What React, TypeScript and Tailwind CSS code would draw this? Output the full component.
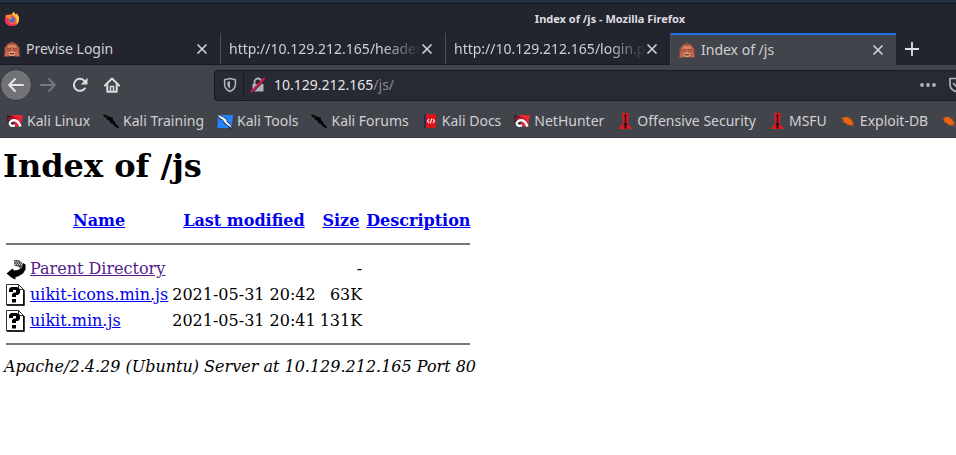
import type { ReactNode } from 'react'

function FirefoxIcon() {
  return (
    <svg viewBox="0 0 16 16" className="h-4 w-4">
      <path d="M8.200 3C9 1.500 9.600 1 9.800.8c.2 1.200 1.200 1.800 2.200 3l.3-1.200c2 1.700 3 3.600 2.700 6.400-.4 3.700-3.300 6-7 6C4 15 1 12.200 1 8.400c0-2.200.6-3.800 1.700-5.200l.4 1.300C4.500 3.500 6 3.300 8.200 3z" fill="#ff5a3c" />
      <path d="M9.800.8c.2 1.200 1.200 1.800 2.200 3l.3-1.200c2 1.700 3 3.600 2.700 6.400-.3 2.400-1.600 4.200-3.500 5.200 1.800-3 1.300-6.500-.5-8.200L8.200 3.500C8.400 2 9.300 1.100 9.800.8z" fill="#ffc83a" />
      <path d="M1 8.400c0 4 3 6.600 7 6.600 2.600 0 4.700-1 5.900-2.900-2.500 1.900-5.400 1.900-7.700.4C3.800 11 3.700 8.500 5 6.500L2.200 5C1.400 6 1 7 1 8.400z" fill="#f0305a" />
      <path d="M2.700 3.200l.4 1.300c1.400-.8 2.800-.7 4.100 0L5 6.800 2 6.300c0-1.300.2-2.200.7-3.100z" fill="#ff9a2c" />
      <circle cx="8" cy="8.600" r="2.900" fill="#3d6fd8" />
      <path d="M4.500 6.200c1.200-.5 2.300-.2 3.200.4l1.200.1-.9 1.200-2 .6z" fill="#ff8a30" />
    </svg>
  )
}

function MonkeyIcon() {
  return (
    <svg viewBox="0 0 16 16" className="h-4 w-4 shrink-0">
      <path d="M7 1.500 8 0l1 1.500c2.800.4 4.500 2 5 4 1.900.4 2.300 2.600 1.200 3.700L16 15.500h-4.500L8 15l-3.500.5H0l.8-6.300C-.3 8.100.1 5.900 2 5.500c.5-2 2.200-3.600 5-4z" fill="#a4523f" />
      <path d="M3.300 6C4 3.600 6.500 3 8 4.200 9.500 3 12 3.600 12.700 6l.6 3H2.700z" fill="#d9825f" />
      <path d="M2.300 7.500 7.700 6.200v3.300L5 11.300l-.5 4H.8zM13.700 7.500 8.300 6.200v3.300l2.700 1.800.5 4h3.700z" fill="#c4694e" />
      <path d="M2.800 7.600h4.700M3 9.200h4.200M13.200 7.600H8.500M13 9.200H8.800" stroke="#8f4436" strokeWidth=".7" />
      <path d="M4.800 11.500 8 9.800l3.200 1.700-.4 3L8 15.200l-2.800-.7z" fill="#e8a27f" />
      <path d="M6 12.300c1.300.9 2.700.9 4 0" fill="none" stroke="#3b1b19" strokeWidth="1.200" />
    </svg>
  )
}

function CloseIcon() {
  return (
    <svg viewBox="0 0 12 12" className="h-3 w-3">
      <path d="M1.500 1.500l9 9M10.500 1.500l-9 9" stroke="#d4d4d6" strokeWidth="1.600" />
    </svg>
  )
}

function ShieldIcon() {
  return (
    <svg viewBox="0 0 14 16" className="h-4 w-[14px] shrink-0" fill="none">
      <path d="M7 1.500 12.400 2.700v4.800c0 3-1.900 5.300-5.400 7-3.500-1.700-5.400-4-5.400-7V2.700z" stroke="#b4b4b8" strokeWidth="1.500" strokeLinejoin="round" />
      <path d="M7 4.300v7.200c-1.700-1-2.600-2.300-2.600-4V4.800z" fill="#b4b4b8" />
    </svg>
  )
}

// Red ribbon dragon, shared by Kali Linux and NetHunter
function DragonIcon() {
  return (
    <svg viewBox="0 0 16 16" className="h-4 w-4">
      <path d="M3 2h13l-2 11.500H9z" fill="#e8262f" />
      <path d="M0 1.500 3.500 3 5 2.500 9 6l-4 7.500-3-.5-1.500-4z" fill="#35202a" />
      <path d="M1.500 7C3.500 4.500 7 4 9.500 6c2 1.500 3 4 4.500 7" fill="none" stroke="#b8142f" strokeWidth="2" />
      <path d="M13.500 13.500C12 9.500 10.500 7.200 7.500 7.200 4.300 7.200 2.400 9 2.800 11c.5 2 3.200 2.300 5.200 1.300" fill="none" stroke="#fff" strokeWidth="2.400" />
    </svg>
  )
}

function BlackDragonIcon() {
  return (
    <svg viewBox="0 0 16 16" className="h-4 w-4">
      <path d="M0 1l5 2 1.500 1 3 .3.6 3 2 1.700.4 1.500L16 14l-.6 1.600-3.800-2.300-1.500-2-3-1.500L6 7 3.500 6.700 4 5 1 3.600z" fill="#050505" />
    </svg>
  )
}

function ToolsIcon() {
  return (
    <svg viewBox="0 0 16 16" className="h-4 w-4">
      <path d="M1 2h15l-1.500 13H.5z" fill="#2583ff" />
      <path d="M0 1l5 2 2 1.500 2.500.5.500 3 2.500 2 3.500 5.500h-3l-3-3-3-2L6 7.500 3 6.500z" fill="#10233f" />
      <path d="M.5 1.500l5 2.500L9 6l1 3 2.500 2 2.500 4-4-2.500-3-2.500L6 7 3 5z" fill="#f4f4f4" />
    </svg>
  )
}

function DocsIcon() {
  return (
    <svg viewBox="0 0 16 16" className="h-4 w-4">
      <path d="M2 1h2v14H2z" fill="#1f2c52" />
      <path d="M4 1h10v14H4z" fill="#d9141a" />
      <path d="M7 6 5.500 8 7 10M11 6l1.500 2-1.500 2M9.700 5.600 8.300 10.400" fill="none" stroke="#fff" strokeWidth="1.100" />
    </svg>
  )
}

function DaggerIcon() {
  return (
    <svg viewBox="0 0 16 16" className="h-4 w-4">
      <path d="M5 0h7l-1 11 3.500 3.500V16H2v-1.500L6 11z" fill="#d81a22" />
      <path d="M8 1h1l.6 2-.6 1 .3 6 1 1.500-1 1.500.2 2.500h-2l.2-2.500-1-1.500 1-1.500L8 4l-.6-1z" fill="#240b0f" />
    </svg>
  )
}

function BugIcon() {
  return (
    <svg viewBox="0 0 16 16" className="h-4 w-4">
      <path d="M3.500 4.500c3-1.700 7 .5 8.500 3.200 1.300 1.500 1.500 4 0 4.600-2 .7-4.200-.9-5.700-1.700C4 9.500 1.800 6.600 3.500 4.500z" fill="#f0640f" />
      <path d="M1 5l3 1.500M2.500 9.500 5 8.500M7 12.500l1-2M8 3.500l.5 2M11.500 5.500l-1 1.500M11.500 11l2.500 2.500M12 9.500l2 .5" stroke="#c9591b" strokeWidth="1" />
    </svg>
  )
}

function BackIcon() {
  return (
    <svg viewBox="0 0 20 22" className="h-[22px] w-5">
      <path d="M8 2h4.500L16 4.500 17.500 8l-3 2.500L12 8.500 8.500 8z" fill="#555" />
      <path d="M9 3.500h1M11 3.500h1M10 5h1M12 5h1M14 5h1M9 6.500h1M11 6.500h1M13 6.500h1M15 6.500h1" stroke="#ccc" strokeWidth="1" />
      <path d="M17 5l2.500 1.500v5L17 15.500 12 18.500 9.500 19v2.500L6 20 .5 15.500 6.500 10.500 8 12.500l4-.5 3.500-2L17 8z" fill="#000" />
    </svg>
  )
}

function UnknownIcon() {
  return (
    <svg viewBox="0 0 20 22" className="h-[22px] w-5">
      <path d="M.5.500h12L17.500 5.500v15.500H.5z" fill="#fff" stroke="#333" strokeWidth="1" />
      <path d="M12.500.5v5h5" fill="none" stroke="#333" strokeWidth="1" />
      <path d="M1 21h17V6" fill="none" stroke="#000" strokeWidth="1.500" />
      <path d="M3 8V5l2-2h6l3 2v4l-2 2h-2v2H6v-3l2-1.500h2V6H7v2zM6 15h4v3.500H6z" fill="#000" />
    </svg>
  )
}

const tabs = [
  { title: 'Previse Login', icon: true, active: false },
  { title: 'http://10.129.212.165/header', icon: false, active: false },
  { title: 'http://10.129.212.165/login.p', icon: false, active: false },
  { title: 'Index of /js', icon: true, active: true },
]

const bookmarks: { label: string; icon: ReactNode }[] = [
  { label: 'Kali Linux', icon: <DragonIcon /> },
  { label: 'Kali Training', icon: <BlackDragonIcon /> },
  { label: 'Kali Tools', icon: <ToolsIcon /> },
  { label: 'Kali Forums', icon: <BlackDragonIcon /> },
  { label: 'Kali Docs', icon: <DocsIcon /> },
  { label: 'NetHunter', icon: <DragonIcon /> },
  { label: 'Offensive Security', icon: <DaggerIcon /> },
  { label: 'MSFU', icon: <DaggerIcon /> },
  { label: 'Exploit-DB', icon: <BugIcon /> },
  { label: '', icon: <BugIcon /> },
]

const files = [
  { name: 'Parent Directory', modified: '', size: '-', parent: true },
  { name: 'uikit-icons.min.js', modified: '2021-05-31 20:42', size: '63K', parent: false },
  { name: 'uikit.min.js', modified: '2021-05-31 20:41', size: '131K', parent: false },
]

export default function App() {
  return (
    <div className="min-h-screen overflow-hidden bg-white">
      <header className="bg-[#23252e] font-['Noto_Sans',sans-serif] text-sm text-[#d0d0d2]">
        <div className="h-1 border-b border-[#111319] bg-[#20303f]"></div>

        {/* Title bar */}
        <div className="grid h-[29px] grid-cols-[24px_1fr] items-center pl-1">
          <FirefoxIcon />
          <p className="pl-[236px] text-center text-[11px] font-bold text-[#dedee0]">Index of /js - Mozilla Firefox</p>
        </div>

        {/* Tabs */}
        <div className="flex h-8">
          {tabs.map((tab) => (
            <div
              key={tab.title}
              className={
                tab.active
                  ? 'flex w-[225px] shrink-0 items-center border-t-2 border-[#2271e8] bg-[#42444c] pr-3 pl-2'
                  : 'flex w-[225px] shrink-0 items-center border-r border-b border-r-[#4c4e56] border-b-[#17181f] pr-3 pl-2 first:w-[221px] first:pr-3 first:pl-1'
              }
            >
              {tab.icon && <MonkeyIcon />}
              <button
                className={
                  tab.icon
                    ? 'min-w-0 flex-1 pl-[6px] text-left whitespace-nowrap'
                    : 'min-w-0 flex-1 [mask-image:linear-gradient(to_right,black_80%,transparent)] text-left whitespace-nowrap'
                }
              >
                {tab.title}
              </button>
              <button aria-label="Close tab" className="shrink-0">
                <CloseIcon />
              </button>
            </div>
          ))}
          <button aria-label="New tab" className="shrink-0 px-2">
            <svg viewBox="0 0 16 16" className="h-4 w-4">
              <path d="M8 1v14M1 8h14" stroke="#e0e0e2" strokeWidth="1.800" />
            </svg>
          </button>
        </div>

        {/* Navigation bar */}
        <div className="flex h-10 items-center bg-[#42444c]">
          <div className="flex w-[214px] shrink-0 items-center">
            <button aria-label="Back" className="flex h-8 w-8 items-center justify-center rounded-full border border-[#35373e] bg-[#717276]">
              <svg viewBox="0 0 16 16" className="h-4 w-4" fill="none" stroke="#e4e4e6" strokeWidth="2" strokeLinecap="round" strokeLinejoin="round">
                <path d="M15 8H1.500M7 2 1.200 8 7 14" />
              </svg>
            </button>
            <button aria-label="Forward" className="flex h-8 w-8 items-center justify-center">
              <svg viewBox="0 0 16 16" className="h-4 w-4" fill="none" stroke="#77787e" strokeWidth="1.800" strokeLinecap="round" strokeLinejoin="round">
                <path d="M1 8h13.500M9 2l5.800 6L9 14" />
              </svg>
            </button>
            <button aria-label="Reload" className="flex h-8 w-8 items-center justify-center">
              <svg viewBox="0 0 16 16" className="h-4 w-4" fill="none">
                <path d="M12.800 11.300A6 6 0 1 1 12.500 4" stroke="#dcdcde" strokeWidth="2" strokeLinecap="round" />
                <path d="M15.500.8v6.700H8.800z" fill="#dcdcde" />
              </svg>
            </button>
            <button aria-label="Home" className="flex h-8 w-8 items-center justify-center">
              <svg viewBox="0 0 16 16" className="h-4 w-4" fill="none" stroke="#dcdcde" strokeWidth="2" strokeLinecap="round" strokeLinejoin="round">
                <path d="M1 8.500 8 1.500l7 7M3.300 8v6.800h9.400V8" />
                <path d="M6.500 14V9.500h3V14" strokeWidth="1.500" strokeLinejoin="miter" />
              </svg>
            </button>
          </div>
          <div className="flex h-[31px] min-w-0 flex-1 items-center rounded-l-sm border border-r-0 border-[#191a21] bg-[#272933] pl-2">
            <ShieldIcon />
            <span className="mx-[6px] h-6 w-px shrink-0 bg-[#16171d]"></span>
            <svg viewBox="0 0 16 16" className="h-4 w-4 shrink-0" fill="none">
              <path d="M4.500 7V5a3.500 3.500 0 0 1 7 0v2" stroke="#b4b4b8" strokeWidth="1.800" />
              <path d="M2.500 7h11v7.500h-11z" fill="#b4b4b8" />
              <path d="M2.500 15.500 15 2.500" stroke="#272933" strokeWidth="1.200" />
              <path d="M1.500 14.500 14 1.500" stroke="#e2124b" strokeWidth="2" strokeLinecap="round" />
            </svg>
            <p className="flex-1 pl-2 text-[#88898f]">
              <span className="text-[#e6e6e8]">10.129.212.165</span>/js/
            </p>
            <button aria-label="Page actions" className="pr-3">
              <svg viewBox="0 0 16 16" className="h-4 w-4" fill="#b4b4b8">
                <circle cx="2" cy="8" r="1.900" />
                <circle cx="8" cy="8" r="1.900" />
                <circle cx="14" cy="8" r="1.900" />
              </svg>
            </button>
            <div className="w-2 shrink-0 overflow-hidden pl-px">
              <svg viewBox="0 0 16 16" className="h-4 w-4" fill="none" stroke="#b4b4b8" strokeWidth="1.700" strokeLinecap="round">
                <path d="M1 1.500h14v6a7 7 0 0 1-14 0zM4.500 6.500 8 10l3.500-3.500" />
              </svg>
            </div>
          </div>
        </div>

        {/* Bookmarks */}
        <nav className="flex h-[33px] items-center gap-[13px] overflow-hidden border-b border-[#34363d] bg-[#42444c] pl-[7px]">
          {bookmarks.map((b) => (
            <a key={b.label} href="#" aria-label={b.label || 'Bookmark'} className="flex shrink-0 items-center gap-1 whitespace-nowrap">
              {b.icon}
              {b.label}
            </a>
          ))}
        </nav>
      </header>

      <main className="px-[3px] font-['DejaVu_Serif',serif] text-base text-black">
        <h1 className="pt-2 text-[32px] leading-10 font-bold">Index of /js</h1>
        <table className="mt-[21px] border-separate border-spacing-[2px] leading-[22px]">
          <thead>
            <tr>
              <th></th>
              {['Name', 'Last modified', 'Size', 'Description'].map((heading) => (
                <th key={heading} className="p-px">
                  <a href="#" className="text-[#0000ee] underline">
                    {heading}
                  </a>
                </th>
              ))}
            </tr>
          </thead>
          <tbody>
            <tr>
              <td colSpan={5} className="px-px pt-2 pb-[10px]">
                <hr className="border-t-2 border-[#777777]" />
              </td>
            </tr>
            {files.map((file) => (
              <tr key={file.name}>
                <td className="p-px">{file.parent ? <BackIcon /> : <UnknownIcon />}</td>
                <td className="p-px">
                  <a href="#" className={file.parent ? 'text-[#551a8b] underline' : 'text-[#0000ee] underline'}>
                    {file.name}
                  </a>
                </td>
                <td className="p-px text-right">{file.modified}</td>
                <td className="p-px text-right">{file.size}</td>
                <td></td>
              </tr>
            ))}
            <tr>
              <td colSpan={5} className="px-px py-2">
                <hr className="border-t-2 border-[#777777]" />
              </td>
            </tr>
          </tbody>
        </table>
        <address className="pl-px">Apache/2.4.29 (Ubuntu) Server at 10.129.212.165 Port 80</address>
      </main>
    </div>
  )
}
